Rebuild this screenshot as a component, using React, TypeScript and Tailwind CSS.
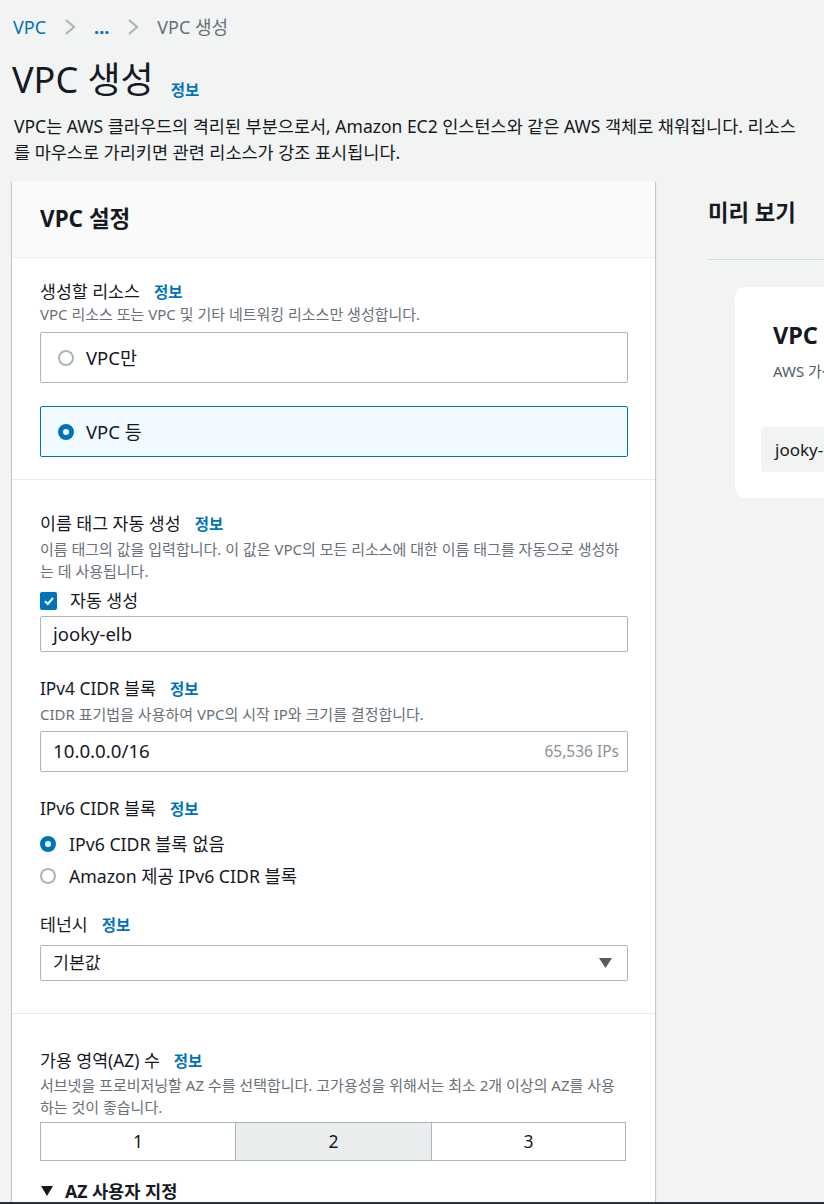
import React from "react";

const FONT = { fontFamily: '"Noto Sans", "Noto Sans CJK KR", sans-serif' };

function Info() {
  return <span className="text-[15.5px] font-bold text-[#0073bb] leading-[22px]">정보</span>;
}

function Radio({ checked }: { checked: boolean }) {
  return checked ? (
    <span className="block w-4 h-4 rounded-full border-[5px] border-[#0073bb] bg-white shrink-0" />
  ) : (
    <span className="block w-4 h-4 rounded-full border-2 border-[#aab7b8] bg-white shrink-0" />
  );
}

function Chevron() {
  return (
    <svg width="12" height="18" viewBox="0 0 12 18" className="shrink-0">
      <path d="M2 2 L10 9 L2 16" fill="none" stroke="#aab7b8" strokeWidth="2.2" />
    </svg>
  );
}

export default function App() {
  return (
    <div
      className="w-[824px] h-[1204px] bg-[#f2f3f3] text-[#16191f] flex flex-col overflow-hidden"
      style={FONT}
    >
      <div className="flex-1 min-h-0 overflow-hidden pl-[12px]">
        {/* Breadcrumb */}
        <div className="pt-[15px] h-[39px] flex items-center gap-[18px] text-[18px] leading-[24px] pl-[1px]">
          <span className="text-[#0073bb]">VPC</span>
          <Chevron />
          <span className="text-[#0073bb] font-bold">...</span>
          <Chevron />
          <span className="text-[#687078]">VPC 생성</span>
        </div>

        {/* Title */}
        <div className="mt-[21px] flex items-end h-[40px]">
          <h1 className="text-[36px] leading-[40px] font-normal">VPC 생성</h1>
          <span className="ml-[17px] mb-[-1px] text-[15.5px] font-bold text-[#0073bb] leading-[22px]">정보</span>
        </div>
        <div className="mt-[13px] text-[17.5px] leading-[26px] pl-[2px]">
          <div className="whitespace-nowrap">
            VPC는 AWS 클라우드의 격리된 부분으로서, Amazon EC2 인스턴스와 같은 AWS 객체로 채워집니다. 리소스
          </div>
          <div className="whitespace-nowrap">를 마우스로 가리키면 관련 리소스가 강조 표시됩니다.</div>
        </div>

        {/* Main row */}
        <div className="mt-[16px] flex gap-[53px]">
          {/* Left panel */}
          <div className="w-[643px] shrink-0 bg-white shadow-[0_1px_1px_0_rgba(0,28,36,0.3),1px_1px_1px_0_rgba(0,28,36,0.15),-1px_1px_1px_0_rgba(0,28,36,0.15)]">
            <div className="h-[77px] bg-[#fafafa] border-b border-[#eaeded] flex items-center pl-[28px]">
              <h2 className="text-[22.5px] font-bold leading-[28px]">VPC 설정</h2>
            </div>

            {/* Section 1 */}
            <div className="px-[28px] pt-[23px] pb-[22px] border-b border-[#eaeded]">
              <div className="flex items-center gap-[14px] leading-[22px]">
                <span className="text-[17.3px]">생성할 리소스</span>
                <Info />
              </div>
              <div className="text-[15px] leading-[20px] text-[#687078] mt-[1px] whitespace-nowrap">
                VPC 리소스 또는 VPC 및 기타 네트워킹 리소스만 생성합니다.
              </div>
              <div className="mt-[8px] w-[588px] h-[51px] border border-[#aab7b8] rounded-[2px] flex items-center pl-[17px] gap-[12px]">
                <Radio checked={false} />
                <span className="text-[18.5px] leading-[24px]">VPC만</span>
              </div>
              <div className="mt-[23px] w-[588px] h-[51px] border border-[#0073bb] bg-[#f1faff] rounded-[2px] flex items-center pl-[17px] gap-[12px]">
                <Radio checked={true} />
                <span className="text-[18.5px] leading-[24px]">VPC 등</span>
              </div>
            </div>

            {/* Section 2 */}
            <div className="px-[28px] pt-[33px] pb-[32px] border-b border-[#eaeded]">
              <div className="flex items-center gap-[14px] leading-[22px]">
                <span className="text-[17.3px]">이름 태그 자동 생성</span>
                <Info />
              </div>
              <div className="mt-[3px] text-[15px] leading-[22px] text-[#687078]">
                <div className="whitespace-nowrap">
                  이름 태그의 값을 입력합니다. 이 값은 VPC의 모든 리소스에 대한 이름 태그를 자동으로 생성하
                </div>
                <div className="whitespace-nowrap">는 데 사용됩니다.</div>
              </div>
              <div className="mt-[8px] h-[22px] flex items-center gap-[13px]">
                <span className="w-[17px] h-[18px] rounded-[2px] bg-[#0073bb] flex items-center justify-center shrink-0">
                  <svg width="12" height="12" viewBox="0 0 12 12">
                    <path d="M2 6.2 L4.8 9 L10 3" fill="none" stroke="#fff" strokeWidth="2.2" />
                  </svg>
                </span>
                <span className="text-[17.3px] leading-[22px]">자동 생성</span>
              </div>
              <div className="mt-[4px] w-[588px] h-[36px] border border-[#aab7b8] rounded-[2px] flex items-center pl-[12px] text-[18.5px]">
                jooky-elb
              </div>

              <div className="mt-[26px] flex items-center gap-[14px] leading-[22px]">
                <span className="text-[17.3px]">IPv4 CIDR 블록</span>
                <Info />
              </div>
              <div className="mt-[4px] text-[15px] leading-[20px] text-[#687078] whitespace-nowrap">
                CIDR 표기법을 사용하여 VPC의 시작 IP와 크기를 결정합니다.
              </div>
              <div className="mt-[7px] w-[588px] h-[41px] border border-[#aab7b8] rounded-[2px] flex items-center justify-between pl-[12px] pr-[8px]">
                <span className="text-[18.7px]">10.0.0.0/16</span>
                <span className="text-[15.5px] text-[#879596]">65,536 IPs</span>
              </div>

              <div className="mt-[26px] flex items-center gap-[14px] leading-[22px]">
                <span className="text-[17.3px]">IPv6 CIDR 블록</span>
                <Info />
              </div>
              <div className="mt-[13px] h-[22px] flex items-center gap-[13px]">
                <Radio checked={true} />
                <span className="text-[17.7px] leading-[22px]">IPv6 CIDR 블록 없음</span>
              </div>
              <div className="mt-[10px] h-[22px] flex items-center gap-[13px]">
                <Radio checked={false} />
                <span className="text-[17.7px] leading-[22px]">Amazon 제공 IPv6 CIDR 블록</span>
              </div>

              <div className="mt-[27px] flex items-center gap-[14px] leading-[22px]">
                <span className="text-[17.3px]">테넌시</span>
                <Info />
              </div>
              <div className="mt-[9px] w-[588px] h-[36px] border border-[#aab7b8] rounded-[2px] flex items-center justify-between pl-[12px] pr-[15px]">
                <span className="text-[17.3px]">기본값</span>
                <svg width="13" height="10" viewBox="0 0 13 10">
                  <path d="M0 0 H13 L6.5 10 Z" fill="#545b64" />
                </svg>
              </div>
            </div>

            {/* Section 3 */}
            <div className="px-[28px] pt-[36px]">
              <div className="flex items-center gap-[14px] leading-[22px]">
                <span className="text-[17.3px]">가용 영역(AZ) 수</span>
                <Info />
              </div>
              <div className="mt-[2px] text-[15px] leading-[22px] text-[#687078]">
                <div className="whitespace-nowrap">
                  서브넷을 프로비저닝할 AZ 수를 선택합니다. 고가용성을 위해서는 최소 2개 이상의 AZ를 사용
                </div>
                <div className="whitespace-nowrap">하는 것이 좋습니다.</div>
              </div>
              <div className="mt-[4px] w-[586px] h-[39px] flex border border-[#aab7b8] text-[17.5px]">
                <div className="w-[194px] flex items-center justify-center">1</div>
                <div className="w-[197px] flex items-center justify-center bg-[#eaeded] border-x border-[#aab7b8]">2</div>
                <div className="flex-1 flex items-center justify-center">3</div>
              </div>
              <div className="mt-[19px] flex items-center gap-[12px] h-[22px]">
                <svg width="12" height="10" viewBox="0 0 12 10" className="ml-[1px]">
                  <path d="M0 0 H12 L6 10 Z" fill="#16191f" />
                </svg>
                <span className="text-[17.6px] font-bold leading-[22px]">AZ 사용자 지정</span>
              </div>
            </div>
          </div>

          {/* Right column */}
          <div className="flex-1 min-w-0 overflow-hidden">
            <div className="pt-[18px] h-[78px]">
              <h2 className="text-[22.3px] font-bold leading-[28px] whitespace-nowrap">미리 보기</h2>
            </div>
            <div className="border-t border-[#d5dbdb]" />
            <div className="mt-[27px] ml-[27px] w-[300px] bg-white rounded-[10px] pl-[26px] pt-[34px] pb-[26px]">
              <div className="pl-[12px] text-[23.5px] font-bold leading-[28px]">VPC</div>
              <div className="pl-[12px] mt-[12px] text-[15px] leading-[20px] text-[#545b64] whitespace-nowrap">
                AWS 가상 네트워크
              </div>
              <div className="mt-[46px] h-[45px] bg-[#f2f3f3] rounded-[4px] flex items-center pl-[14px] text-[17px] whitespace-nowrap">
                jooky-elb-vpc
              </div>
            </div>
          </div>
        </div>
      </div>
      <div className="h-[2px] bg-[#2c3137] shrink-0" />
    </div>
  );
}
